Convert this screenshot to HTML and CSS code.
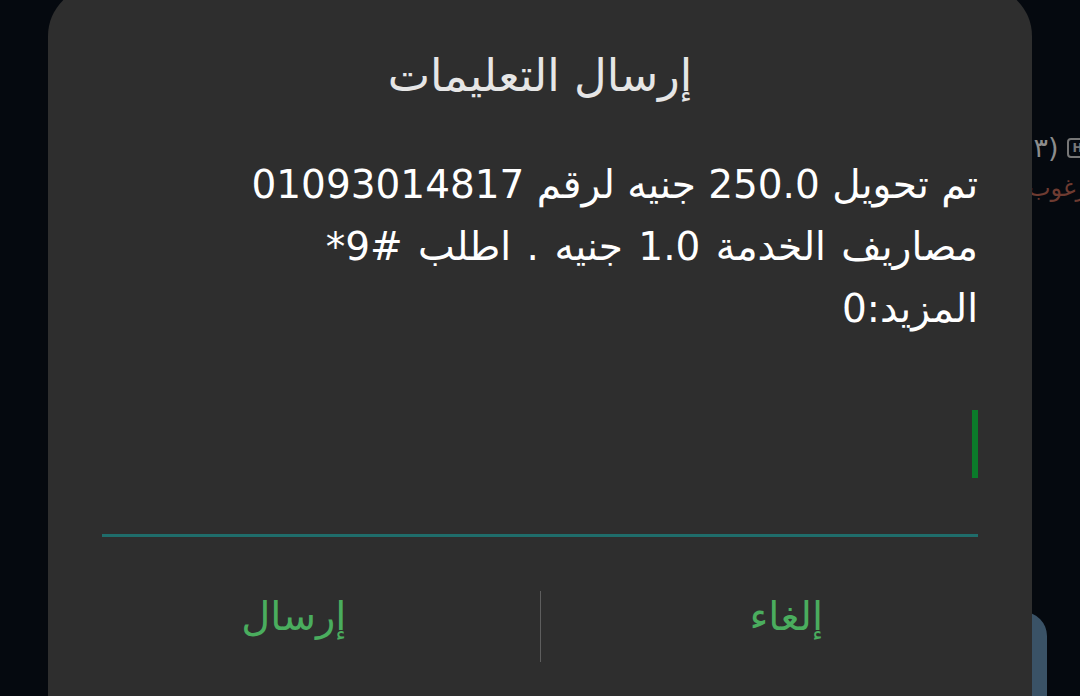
FILE: index.html
```html
<!DOCTYPE html>
<html lang="ar">
<head>
<meta charset="utf-8">
<link rel="stylesheet" href="styles.css">
</head>
<body>
<div class="screen">
  <div class="backdrop">
    <div class="bg-row">
      <span class="bg-count">(٣)</span>
      <span class="bg-hd">HD</span>
    </div>
    <div class="bg-sub">مرغوب</div>
    <div class="bg-button"></div>
  </div>

  <div class="dialog" dir="rtl">
    <h1 class="title">إرسال التعليمات</h1>
    <div class="message">
      <div class="line">تم تحويل 250.0 جنيه لرقم 01093014817</div>
      <div class="line line-wide">مصاريف الخدمة 1.0 جنيه . اطلب #9*</div>
      <div class="line">المزيد:0</div>
    </div>
    <div class="input-area">
      <span class="cursor"></span>
    </div>
    <div class="underline"></div>
    <div class="actions">
      <button class="action">إلغاء</button>
      <span class="divider"></span>
      <button class="action">إرسال</button>
    </div>
  </div>
</div>
</body>
</html>
```

FILE: styles.css
```css
* { box-sizing: border-box; }

html, body {
  margin: 0;
  padding: 0;
  width: 1080px;
  height: 696px;
  overflow: hidden;
  background: #05090f;
  font-family: "DejaVu Sans", "Noto Sans", sans-serif;
}

.screen {
  position: relative;
  width: 1080px;
  height: 696px;
  overflow: hidden;
}

.backdrop {
  position: absolute;
  inset: 0;
}

.bg-row {
  position: absolute;
  left: 1023px;
  top: 132px;
  display: flex;
  align-items: center;
  gap: 8px;
  white-space: nowrap;
}

.bg-count {
  color: #8c8c8c;
  font-size: 27px;
  direction: ltr;
  unicode-bidi: isolate;
}

.bg-hd {
  display: inline-block;
  border: 2px solid #777;
  border-radius: 4px;
  color: #777;
  font-size: 12px;
  font-weight: bold;
  padding: 1px 4px;
  line-height: 14px;
}

.bg-sub {
  position: absolute;
  left: 1028px;
  top: 174px;
  color: #6e3b31;
  font-size: 24px;
  white-space: nowrap;
  direction: rtl;
}

.bg-button {
  position: absolute;
  left: 960px;
  top: 612px;
  width: 87px;
  height: 140px;
  background: #3a5266;
  border-radius: 24px;
}

.dialog {
  position: absolute;
  left: 48px;
  top: -14px;
  width: 984px;
  height: 780px;
  background: #2e2e2e;
  border-radius: 50px;
  padding: 0 54px;
  display: flex;
  flex-direction: column;
}

.title {
  margin: 50px 0 0;
  height: 80px;
  line-height: 80px;
  text-align: center;
  font-weight: normal;
  font-size: 45px;
  color: #e6e6e6;
}

.message {
  margin-top: 38px;
  color: #ffffff;
  font-size: 39px;
  text-align: right;
}

.line {
  height: 62px;
  line-height: 62px;
  white-space: nowrap;
}

.line-wide {
  word-spacing: 3px;
}

.input-area {
  height: 194px;
  display: flex;
  align-items: flex-start;
  justify-content: flex-start;
}

.cursor {
  display: block;
  width: 6px;
  height: 68px;
  background: #0b7a2a;
  margin-top: 70px;
}

.underline {
  height: 3px;
  background: #1f6d6b;
}

.actions {
  margin: 54px -54px 0;
  display: grid;
  grid-template-columns: 1fr 1px 1fr;
  align-items: center;
  height: 71px;
}

.action {
  background: none;
  border: none;
  padding: 0;
  color: #4aad5e;
  font-family: inherit;
  font-size: 40px;
  text-align: center;
  height: 71px;
  line-height: 50px;
  padding-bottom: 21px;
}

.divider {
  width: 1px;
  height: 71px;
  background: #5e5e5e;
}
```
